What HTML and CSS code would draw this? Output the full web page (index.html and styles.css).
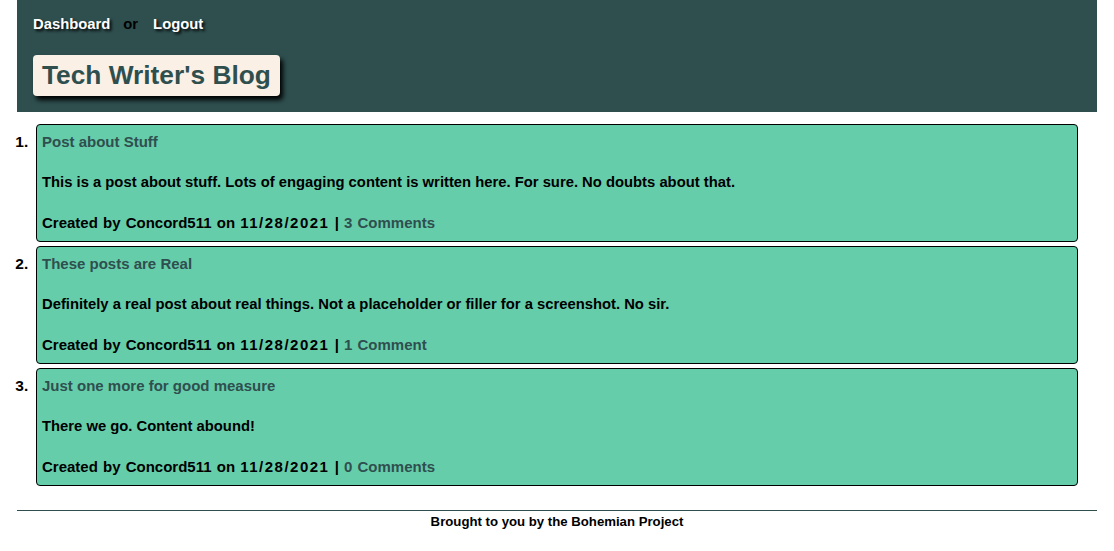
FILE: index.html
```html
<!DOCTYPE html>
<html lang="en">
<head>
<meta charset="utf-8">
<title>Tech Writer's Blog</title>
<link rel="stylesheet" href="styles.css">
</head>
<body>
<div class="page">
  <header class="site-header">
    <nav class="nav">
      <a class="nav-link" href="#">Dashboard</a>
      <span class="nav-or">or</span>
      <a class="nav-link" href="#">Logout</a>
    </nav>
    <h1 class="site-title">Tech Writer's Blog</h1>
  </header>
  <main>
    <ol class="posts">
      <li class="post-item">
        <article class="post">
          <h2 class="post-title">Post about Stuff</h2>
          <p class="post-body">This is a post about stuff. Lots of engaging content is written here. For sure. No doubts about that.</p>
          <p class="post-meta">Created by Concord511 on <span class="date">11/28/2021</span> | <a class="comments" href="#">3 Comments</a></p>
        </article>
      </li>
      <li class="post-item">
        <article class="post">
          <h2 class="post-title">These posts are Real</h2>
          <p class="post-body">Definitely a real post about real things. Not a placeholder or filler for a screenshot. No sir.</p>
          <p class="post-meta">Created by Concord511 on <span class="date">11/28/2021</span> | <a class="comments" href="#">1 Comment</a></p>
        </article>
      </li>
      <li class="post-item">
        <article class="post">
          <h2 class="post-title">Just one more for good measure</h2>
          <p class="post-body">There we go. Content abound!</p>
          <p class="post-meta">Created by Concord511 on <span class="date">11/28/2021</span> | <a class="comments" href="#">0 Comments</a></p>
        </article>
      </li>
    </ol>
  </main>
  <footer class="site-footer">Brought to you by the Bohemian Project</footer>
</div>
</body>
</html>
```

FILE: styles.css
```css
* { box-sizing: border-box; }
html, body { margin: 0; padding: 0; background: #fff; }
body {
  font-family: "Liberation Sans", Arial, sans-serif;
  font-weight: bold;
  color: #000;
}
.page { padding: 0 17px; }

.site-header {
  background: #2F4F4F;
  height: 112px;
  padding: 15px 16px 0;
}
.nav {
  display: flex;
  align-items: center;
  gap: 13px;
  font-size: 14.8px;
  line-height: 18px;
}
.nav-link {
  color: #fff;
  text-decoration: none;
  text-shadow: 2px 2px 3px #000;
}
.nav-or { color: #000; margin-right: 2px; }

.site-title {
  display: inline-block;
  margin: 22px 0 0;
  background: #FAF0E6;
  color: #2F4F4F;
  font-size: 26.3px;
  line-height: 41px;
  padding: 0 9px;
  border-radius: 4px;
  box-shadow: 3px 4px 5px #000;
}

.posts {
  margin: 12px 0 0;
  padding: 0 19px;
}
.post-item {
  margin-bottom: 4px;
  font-size: 15px;
}
.post-item::marker {
  content: counter(list-item) ".\2002";
  font-weight: bold;
  font-size: 15.5px;
}
.post {
  background: #66CDAA;
  border: 1px solid #000;
  border-radius: 4px;
  padding: 8px 5px 10px;
}
.post-title {
  margin: 0;
  font-size: 15px;
  line-height: 17px;
  color: #2F4F4F;
}
.post-body {
  margin: 24px 0 0;
  font-size: 14.8px;
  line-height: 17px;
}
.post-meta {
  margin: 23px 0 0;
  font-size: 15px;
  line-height: 17px;
  word-spacing: 1px;
}
.date { letter-spacing: 1.5px; }
.comments { color: #2F4F4F; text-decoration: none; }

.site-footer {
  margin-top: 24px;
  border-top: 1px solid #2F4F4F;
  text-align: center;
  font-size: 13.2px;
  line-height: 20px;
  padding-top: 1px;
}
```
